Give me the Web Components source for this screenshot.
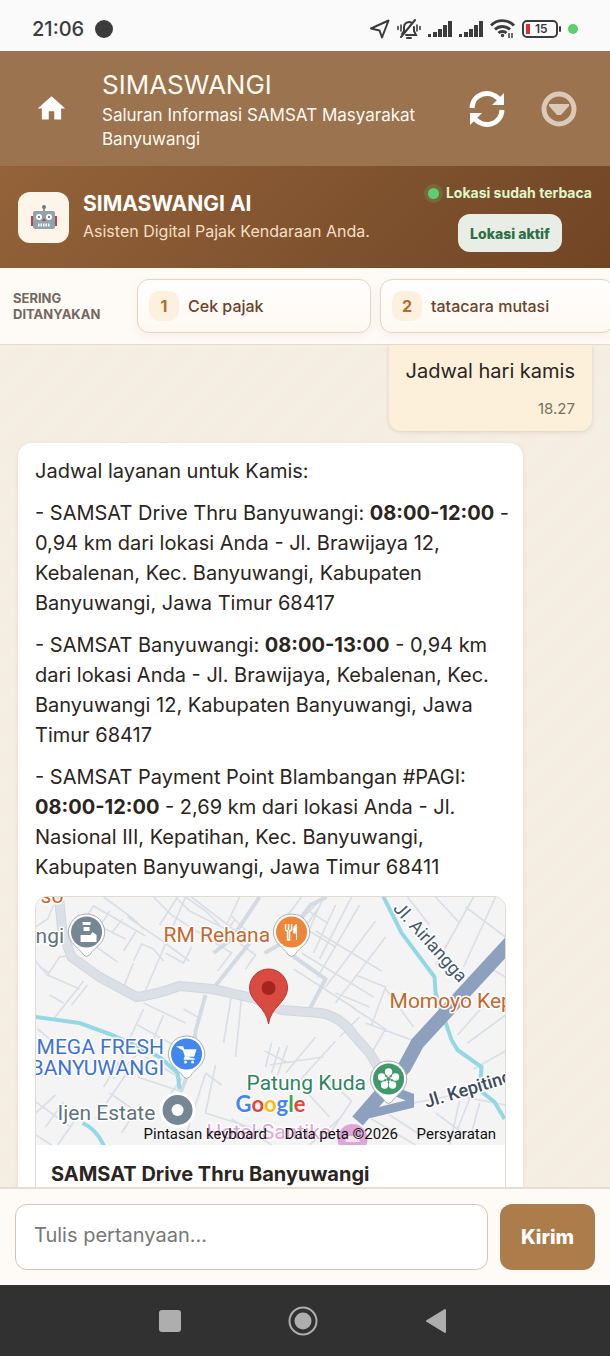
<!DOCTYPE html>
<html lang="id">
<head>
<meta charset="utf-8">
<meta name="viewport" content="width=device-width, initial-scale=1">
<title>SIMASWANGI</title>
<style>
  html, body { margin: 0; height: 100%; }
  body { font-family: Inter, "Noto Sans", sans-serif; color: #2b2521; background: #f5eee3; }
</style>
</head>
<body>
<simaswangi-app></simaswangi-app>
<script>
const define = (name, html, setup) => {
  const template = document.createElement('template');
  template.innerHTML = '<style>*{box-sizing:border-box}svg{display:block}h1,h2,p{margin:0}button{font:inherit;border:0;margin:0;cursor:pointer}</style>' + html;
  customElements.define(name, class extends HTMLElement {
    constructor() {
      super();
      this.attachShadow({ mode: 'open' }).append(template.content.cloneNode(true));
      if (setup) setup(this);
    }
  });
};

define('status-bar', `
<style>
  :host { display: flex; align-items: center; justify-content: space-between; flex: none; height: 51px; padding: 6px 32px 0 32px; background: #fafafa; color: #3c3c3c; }
  div { display: flex; align-items: center; gap: 7px; }
  .time { gap: 11px; font-size: 20px; line-height: 24px; font-weight: 500; }
  .cell { font-size: 12px; line-height: 14px; font-weight: 600; width: 36px; height: 18px; padding-left: 11px; display: block; border: 2px solid #3c3c3c; border-radius: 5px; position: relative; }
  .cell::before { content: ""; position: absolute; left: 2px; top: 2px; width: 4px; height: 10px; background: #d5302c; }
  .cell::after { content: ""; position: absolute; right: -5px; top: 4px; width: 2px; height: 6px; background: #3c3c3c; border-radius: 1px; }
  .live { width: 10px; height: 10px; border-radius: 50%; background: #5ad06a; margin-left: 3px; }
</style>
<div class="time"><span>21:06</span><svg width="18" height="18"><circle cx="9" cy="9" r="9" fill="#3c3c3c"/></svg></div>
<div>
  <svg width="20" height="20" viewBox="0 0 20 20" fill="none" stroke="#3c3c3c" stroke-width="2" stroke-linejoin="round"><path d="M1 9.500 18.500 1.500 12 18.500 9.500 11.500z"/></svg>
  <svg width="24" height="20" viewBox="0 0 24 20" fill="none" stroke="#3c3c3c" stroke-width="2" stroke-linecap="round"><path d="M7 12V8a5 5 0 0 1 8-4M17 8v4l2 4H9M4 18 18 1M10 19h4M5 15l2-3"/><path d="M4 6v6M1 7.500v3M20 6v6M23 7.500v3" stroke-width="1.600"/></svg>
  <svg width="24" height="16" viewBox="0 0 24 16" fill="#3c3c3c"><path d="M0 13h3v3H0zM5 11h4v5H5zM10 8h4v8h-4zM15 4h4v12h-4zM20 0h4v16h-4z"/></svg>
  <svg width="24" height="16" viewBox="0 0 24 16" fill="#3c3c3c"><path d="M0 13h3v3H0zM5 11h4v5H5zM10 8h4v8h-4zM15 4h4v12h-4zM20 0h4v16h-4z"/></svg>
  <svg width="25" height="19" viewBox="0 0 25 19" fill="none" stroke="#3c3c3c" stroke-width="2.800"><path d="M1 6.500C7 0 18 0 24 6.500M5 10.500c4-4 11-4 15 0M8.500 14c2-2 6-2 8 0"/><circle cx="12.500" cy="16.500" r="1" stroke-width="1.500"/><path d="M19 14v5M22 14v5" stroke-width="1.500"/></svg>
  <span class="cell">15</span><span class="live"></span>
</div>`);

define('app-header', `
<style>
  :host { display: flex; align-items: center; flex: none; height: 115px; padding: 0 33px 0 35px; background: #9b734e; color: #fffaf2; }
  .copy { flex: 1; margin-left: 34px; }
  h1 { font-size: 26px; line-height: 36px; font-weight: 400; }
  p { font-size: 17px; line-height: 24px; font-weight: 400; max-width: 340px; }
  button { background: none; padding: 0; }
  .more { margin-left: 35px; }
</style>
<button aria-label="Beranda"><svg width="33" height="33" viewBox="0 0 24 24" fill="#fff"><path d="M10 20v-6h4v6h5v-8h3L12 3 2 12h3v8z"/></svg></button>
<div class="copy"><h1>SIMASWANGI</h1><p>Saluran Informasi SAMSAT Masyarakat Banyuwangi</p></div>
<button aria-label="Muat ulang"><svg width="38" height="38" viewBox="0 0 38 38" fill="none" stroke="#fff" stroke-width="5"><path d="M4 18C5 3 22-1 31 9M34 20C33 35 16 39 7 29"/><path d="M36 3v12H24zM2 35V23h12z" fill="#fff" stroke="none"/></svg></button>
<button class="more" aria-label="Menu"><svg width="36" height="36" viewBox="0 0 36 36"><circle cx="18" cy="18" r="15" fill="none" stroke="#dcc9b8" stroke-width="5"/><path d="M8 13h20v2l-8 9h-4l-8-9z" fill="#dcc9b8"/></svg></button>`);

define('assistant-bar', `
<style>
  :host { display: flex; align-items: center; flex: none; height: 102px; padding: 0 18px; background: linear-gradient(135deg, #94633a, #704525); color: #fff; }
  .avatar { display: grid; place-items: center; width: 51px; height: 51px; border-radius: 12px; background: #fdf5ea; }
  .copy { flex: 1; margin-left: 14px; }
  h2 { font-size: 21px; line-height: 28px; font-weight: 700; }
  p { font-size: 16px; line-height: 26px; font-weight: 400; color: #f5dfc4; white-space: nowrap; }
  .place { display: flex; flex-direction: column; align-items: center; gap: 10px; }
  .state { display: flex; align-items: center; gap: 7px; font-size: 14px; line-height: 22px; font-weight: 700; color: #dcf7c8; white-space: nowrap; }
  .state::before { content: ""; width: 11px; height: 11px; border-radius: 50%; background: #5fce72; box-shadow: 0 0 0 4px #5fce7233; }
  button { height: 38px; padding: 0 12px; border-radius: 12px; background: #e8eee6; color: #2f6e46; font-size: 14px; font-weight: 800; }
</style>
<div class="avatar"><svg width="26" height="26" viewBox="0 0 26 26"><path d="M13 3v5" stroke="#6b7a83" stroke-width="1.500"/><circle cx="13" cy="3" r="2" fill="#6b7a83"/><path d="M0 12h26v10H0z" fill="#b8414c"/><rect x="2" y="7" width="22" height="18" rx="2" fill="#8fa3ad"/><circle cx="8" cy="13" r="3" fill="#fff"/><circle cx="18" cy="13" r="3" fill="#fff"/><circle cx="8" cy="13" r="1" fill="#4e6069"/><circle cx="18" cy="13" r="1" fill="#4e6069"/><path d="m13 14 2 3h-4z" fill="#c8403f"/><path d="M7 21h12" stroke="#fff" stroke-width="3" stroke-dasharray="1.500 1"/></svg></div>
<div class="copy"><h2>SIMASWANGI AI</h2><p>Asisten Digital Pajak Kendaraan Anda.</p></div>
<div class="place"><span class="state">Lokasi sudah terbaca</span><button>Lokasi aktif</button></div>`);

define('faq-chip', `
<style>
  :host { display: block; flex: none; width: 234px; }
  button { display: flex; align-items: center; gap: 9px; width: 100%; height: 54px; padding: 0 11px; border: 1px solid #e6d3c0; border-radius: 12px; background: linear-gradient(#fff, #fff8f1); box-shadow: 0 3px 8px #8a5a2d12; color: #6b432b; font-size: 16px; font-weight: 500; }
  .num { display: grid; place-items: center; width: 30px; height: 30px; border-radius: 10px; background: #fcf0de; color: #b56b2c; font-weight: 700; }
</style>
<button><span class="num"><slot name="num"></slot></span><slot></slot></button>`);

define('faq-strip', `
<style>
  :host { display: flex; align-items: center; flex: none; height: 77px; padding-left: 13px; background: #fefaf6; border-bottom: 1px solid #e4dbd0; overflow: hidden; }
  p { flex: none; width: 124px; font-size: 13px; line-height: 16px; font-weight: 700; color: #72685f; }
  div { display: flex; gap: 9px; }
</style>
<p>SERING<br>DITANYAKAN</p>
<div><slot></slot></div>`);

define('user-message', `
<style>
  :host { display: block; flex: none; align-self: flex-end; padding: 11px 17px 9px; border-radius: 0 0 12px 12px; background: #fcf0db; box-shadow: 0 1px 4px #6b432b2b; font-size: 20px; line-height: 30px; text-align: right; }
  time { display: block; margin-top: 10px; font-size: 15px; line-height: 26px; color: #79705f; }
</style>
<slot></slot><time>18.27</time>`);

define('bot-message', `
<style>
  :host { display: flex; flex-direction: column; gap: 12px; width: 88%; flex: none; padding: 13px 17px; border-radius: 14px; background: #fff; box-shadow: 0 1px 4px #6b432b1f; font-size: 20px; line-height: 30px; white-space: nowrap; }
</style>
<slot></slot>`);

define('location-card', `
<style>
  :host { display: block; margin-top: 2px; border: 1px solid #e2d9cf; border-radius: 12px; overflow: hidden; background: #fff; }
  svg { width: 100%; height: 248px; font-family: Roboto, sans-serif; }
  h2 { font-size: 20px; line-height: 28px; font-weight: 700; padding: 15px; }
  .label { font-size: 21px; paint-order: stroke; stroke: #fff; stroke-width: 3px; stroke-linejoin: round; }
  .label .street { font-size: 18px; }
</style>
<svg viewBox="0 0 470 248" preserveAspectRatio="xMidYMid slice" role="img" aria-label="Peta lokasi">
  <defs>
    <symbol id="pin" viewBox="0 0 40 46" overflow="visible"><path d="M20 1a18 18 0 0 0-15 28c4 5 9 8 12 13q3 3 6 0c3-5 8-8 12-13A18 18 0 0 0 20 1z" fill="#fff" stroke="#a9b0b5" stroke-width="1"/><circle cx="20" cy="19" r="15.500"/></symbol>
  </defs>
  <rect width="470" height="248" fill="#f5f4f5"/>
  <g fill="none" stroke="#d9dfe5" stroke-width="1.700">
    <path d="M46 27 58 9 110 39M50 22l40 20M68 0 98 22l10 10M74 14 64 30M87 22 76 36M100 35 88 54M58 48 82 65M0 30l12-8 6-14M0 64l12 14 12-18 14-2 18 14M12 78l32 14M14 76 4 70M48 84 18 122M36 108l16-20M14 98l14 8M88 90l10-24M98 64l8-17 12 5 10 12M108 98l42-98M92 20l32 22 30 22M118 0l18 18 28 18 22 4 14-18M140 0l14 14 36 18M124 28l18-28M150 0l20 14 14 14M130 56l18 10 8-16M156 0l44 34M204 0l-12 26M195 18l15 15M180 46l16 10-14 18M190 36l30 22-10 14"/>
    <path d="M2 132l22 18M108 106l42 20M102 128l36 20M94 142l14-30M116 146l12-28M148 112l14 8M196 98l-8 48M206 100l-6 60M68 190l30-48M78 182l38-40M74 196l26 18-14 22M110 160l36 22-18 24M102 180l42 14M60 222l34-50M0 205l34 24M0 216l20-18M10 230l18-25M22 248l24-34M0 238l16 10M150 240l20-64M170 176l16 12M180 168l-10 48 56 18"/>
    <path d="M246 26l20-26M256 32l32-32M270 12l22 14M264 28l36 22M282 12l-18 26M288 0l-14 32M300 8l-22 48M316 0l-32 62M324 8l-42 72M340 24l-50 66M350 40l-50 66M280 34l66 40M266 56l72 44M258 72l62 40M320 78l30 12-14 38M300 96l34 14M316 110l34 22-14 24M330 126l54 20M350 92l28 38"/>
    <path d="M372 0l22 28M400 0l24 26M438 0l-38 68M430 10l40 30M460 0l-32 70M446 66l24 14M452 104l-30 34M470 118l-38 28M438 172l32-18M424 204l-10 44M434 202l-12 30M444 206l-8 30M400 216l30 22M378 206l40-8 52 10"/>
    <path d="M229 154l24 12M236 146l-6 24M244 150l-8 26M252 148l-10 30M234 168l54-8M250 176l30-36M260 188l40-44M270 194l24 26M290 180l26 24-20 30M306 220l-32 28M336 222l44 26M354 218l34 22M196 222l40 26M304 140l20-20"/>
  </g>
  <g fill="none" stroke="#d3dae2" stroke-width="4"><path d="M174 96 214 46M256 58l34 24-18 34M229 56l18-10 28-38 16-8M170 98l-10 36-4 34-20 50M224 0l-28 42-18 14"/></g>
  <path d="M23-4 27 36 36 60 64 80 101 100Q120 98 144 89L177 92 217 101 246 113 285 116Q306 120 318 138L334 156 346 176" fill="none" stroke="#cfd7df" stroke-width="10"/>
  <path d="M23-4 27 36 36 60 64 80 101 100Q120 98 144 89L177 92 217 101 246 113 285 116Q306 120 318 138L334 156 346 176" fill="none" stroke="#dae0e6" stroke-width="8"/>
  <g fill="none" stroke="#94d8e5" stroke-width="4"><path d="M347-2 366 36 399 80 400 96 416 143 422 153 446 170 444 193 459 205 469 222M0 120l44 6 33 12 47 22 18 16 2 16M47 226q14 6 22 24"/></g>
  <path d="M476 44 382 146 369 170 322 224" fill="none" stroke="#8da1bf" stroke-width="14"/>
  <path d="M358 194 374 200 374 207 333 217" fill="none" stroke="#8da1bf" stroke-width="9"/>
  <use href="#pin" x="31" y="16" width="40" height="46" fill="#748792"/>
  <path d="M47 25h8v3h-8zM48 30h6v4h-6zM45 38h14v7H45z" fill="#fff"/><path d="m53 41 4-6 4 3v7h-6z" fill="#fff"/>
  <use href="#pin" x="236" y="16" width="40" height="46" fill="#ee8539"/>
  <path d="M250 27v5q0 2 2 2v9h2v-9q2 0 2-2v-5M253 27v6" fill="none" stroke="#fff" stroke-width="1.500"/><path d="M261 43V27q-4 3-3 9h3" fill="#fff" stroke="#fff"/>
  <use href="#pin" x="131" y="138" width="40" height="46" fill="#4087ef"/>
  <path d="M143 150h4l3 9h8l2-6h-12zM150 159l-1 3h10" fill="#fff" stroke="#fff" stroke-width="1.500"/><circle cx="150" cy="165" r="1.500" fill="#fff"/><circle cx="157" cy="165" r="1.500" fill="#fff"/>
  <circle cx="142" cy="213" r="18" fill="#fff"/><circle cx="142" cy="213" r="15" fill="#748792"/><circle cx="142" cy="213" r="6" fill="#fff"/>
  <use href="#pin" x="333" y="163" width="40" height="46" fill="#41996a"/>
  <g fill="#fff"><circle cx="353" cy="175" r="3.700"/><circle cx="360" cy="180" r="3.700"/><circle cx="357" cy="188" r="3.700"/><circle cx="349" cy="188" r="3.700"/><circle cx="346" cy="180" r="3.700"/></g>
  <path d="M353 175v7l7-2M353 182l4 6M353 182l-4 6M353 182l-7-2" stroke="#fff" stroke-width="2" fill="none"/><circle cx="353" cy="182" r="2" fill="#41996a"/>
  <path d="M233 127c-2-17-19-22-19-36a19 19 0 0 1 38 0c0 14-17 19-19 36z" fill="#d94b40" stroke="#b93830" stroke-width="1"/><circle cx="233" cy="91" r="7" fill="#a32520"/>
  <g class="label">
    <text x="5" y="6" fill="#c5662d">so</text>
    <text x="0" y="46" fill="#61727d">ngi</text>
    <text x="128" y="45" fill="#c5662d">RM Rehana</text>
    <text x="354" y="111" fill="#c5662d">Momoyo Kep</text>
    <text x="1" y="157" fill="#3d73d7">MEGA FRESH</text>
    <text x="-5" y="178" fill="#3d73d7">BANYUWANGI</text>
    <text x="22" y="223" fill="#61727d">Ijen Estate</text>
    <text x="211" y="193" fill="#2f8460">Patung Kuda</text>
    <text class="street" transform="translate(357 12) rotate(48)" fill="#46566b">Jl. Airlangga</text>
    <text class="street" transform="translate(391 211) rotate(-17)" font-weight="500" fill="#3c4b60">Jl. Kepiting</text>
    <text x="171" y="242" fill="#dfa6d5">Hotel Santika</text>
  </g>
  <circle cx="317" cy="242" r="15" fill="#dfa6d5"/><path d="M310 239h14v6h-14z" fill="#f5e3f2"/>
  <text x="200" y="215" font-family="Lato" font-size="22" font-weight="700" stroke="#fff" stroke-width="2" paint-order="stroke"><tspan fill="#4285f4">G</tspan><tspan fill="#ea4335">o</tspan><tspan fill="#fbbc05">o</tspan><tspan fill="#4285f4">g</tspan><tspan fill="#34a853">l</tspan><tspan fill="#ea4335">e</tspan></text>
  <g font-size="15" fill="#111"><text x="108" y="242">Pintasan keyboard</text><text x="249" y="242">Data peta ©2026</text><text x="381" y="242">Persyaratan</text></g>
</svg>
<h2><slot></slot></h2>`);

define('chat-log', `
<style>
  :host { display: flex; flex-direction: column; gap: 12px; flex: 1; min-height: 0; overflow: hidden; padding: 0 18px; background: repeating-linear-gradient(135deg, #f5eee2 0 14px, #f5ede1 14px 28px); }
</style>
<slot></slot>`);

define('message-composer', `
<style>
  :host { display: block; flex: none; padding: 15px; background: #fefaf5; border-top: 2px solid #e6ded4; }
  form { display: flex; gap: 12px; }
  input { flex: 1; min-width: 0; height: 66px; padding: 0 18px 4px; border: 1px solid #d2c5b7; border-radius: 12px; background: #fff; color: inherit; font: inherit; font-size: 20px; outline: 0; }
  input::placeholder { color: #777; opacity: 1; }
  button { width: 95px; border-radius: 12px; background: #ad7c4b; color: #fff; font-size: 20px; font-weight: 800; }
</style>
<form><input type="text" aria-label="Pertanyaan" placeholder="Tulis pertanyaan..."><button type="button">Kirim</button></form>`);

define('system-nav', `
<style>
  :host { display: flex; align-items: center; justify-content: center; gap: 103px; flex: none; height: 71px; padding-right: 4px; background: #313131; }
  button { display: grid; place-items: center; width: 30px; height: 30px; padding: 0; background: none; }
</style>
<button aria-label="Aplikasi terbaru"><svg width="22" height="22"><rect width="22" height="22" rx="3" fill="#aeaeae"/></svg></button>
<button aria-label="Layar utama"><svg width="30" height="30"><circle cx="15" cy="15" r="13.500" fill="none" stroke="#aeaeae" stroke-width="2"/><circle cx="15" cy="15" r="8.500" fill="#aeaeae"/></svg></button>
<button aria-label="Kembali"><svg width="22" height="26" viewBox="0 0 22 26"><path d="M20 2v22L2 13z" fill="#aeaeae" stroke="#aeaeae" stroke-width="2" stroke-linejoin="round"/></svg></button>`);

define('simaswangi-app', `
<style>:host { display: flex; flex-direction: column; height: 100vh; overflow: hidden; }</style>
<status-bar></status-bar>
<app-header></app-header>
<assistant-bar></assistant-bar>
<faq-strip>
  <faq-chip><span slot="num">1</span>Cek pajak</faq-chip>
  <faq-chip><span slot="num">2</span>tatacara mutasi</faq-chip>
</faq-strip>
<chat-log>
  <user-message>Jadwal hari kamis</user-message>
  <bot-message>
    <p>Jadwal layanan untuk Kamis:</p>
    <p>- SAMSAT Drive Thru Banyuwangi: <b>08:00-12:00</b> -<br>0,94 km dari lokasi Anda - Jl. Brawijaya 12,<br>Kebalenan, Kec. Banyuwangi, Kabupaten<br>Banyuwangi, Jawa Timur 68417</p>
    <p>- SAMSAT Banyuwangi: <b>08:00-13:00</b> - 0,94 km<br>dari lokasi Anda - Jl. Brawijaya, Kebalenan, Kec.<br>Banyuwangi 12, Kabupaten Banyuwangi, Jawa<br>Timur 68417</p>
    <p>- SAMSAT Payment Point Blambangan #PAGI:<br><b>08:00-12:00</b> - 2,69 km dari lokasi Anda - Jl.<br>Nasional III, Kepatihan, Kec. Banyuwangi,<br>Kabupaten Banyuwangi, Jawa Timur 68411</p>
    <location-card>SAMSAT Drive Thru Banyuwangi</location-card>
  </bot-message>
</chat-log>
<message-composer></message-composer>
<system-nav></system-nav>`);
</script>
</body>
</html>
